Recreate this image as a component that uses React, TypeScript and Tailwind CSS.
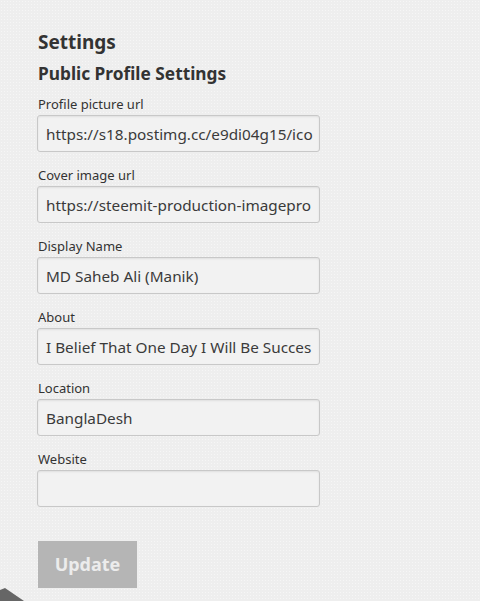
import React from "react";

const fields = [
  { label: "Profile picture url", value: "https://s18.postimg.cc/e9di04g15/ico" },
  { label: "Cover image url", value: "https://steemit-production-imagepro" },
  { label: "Display Name", value: "MD Saheb Ali (Manik)" },
  { label: "About", value: "I Belief That One Day I Will Be Succes" },
  { label: "Location", value: "BanglaDesh" },
  { label: "Website", value: "" },
];

export default function App() {
  return (
    <div
      className="relative w-[480px] h-[601px] overflow-hidden bg-[#eeeeee] bg-[image:radial-gradient(#f6f6f6_0.8px,transparent_0.9px)] bg-[size:3px_3px] text-[#333333]"
      style={{ fontFamily: '"Noto Sans", "Open Sans", sans-serif' }}
    >
      <div className="flex flex-col pl-[38px] pt-[29px]">
        <h1 className="text-[19px] leading-[27px] font-bold text-[#333]">Settings</h1>
        <h2 className="mt-[6px] text-[17.3px] leading-[24px] font-bold text-[#333]">Public Profile Settings</h2>
        <div className="mt-[9px] flex flex-col gap-[14px]">
          {fields.map((f) => (
            <div key={f.label} className="flex flex-col">
              <label className="text-[13px] leading-[18px] text-[#333]">{f.label}</label>
              <div className="mt-[2px] ml-[-1px] w-[283px] h-[37px] rounded-[3px] border border-[#c8c8c8] bg-[#f2f2f2] pl-[8px] pr-[4px] shadow-[inset_0_1px_2px_rgba(0,0,0,0.08)] flex items-center">
                <div className="w-full whitespace-nowrap text-[15.3px] leading-[22px] text-[#3a3a3a]">
                  {f.value}
                </div>
              </div>
            </div>
          ))}
        </div>
        <button
          className="mt-[34px] w-[99px] h-[47px] bg-[#b5b5b5] text-[#ececec] text-[18px] font-bold flex items-center justify-center"
          style={{ fontFamily: '"Noto Sans", "Open Sans", sans-serif' }}
        >
          Update
        </button>
      </div>
      <svg className="absolute left-0 bottom-0" width="26" height="14" viewBox="0 0 26 14">
        <polygon points="0,3 5,1 24,14 0,14" fill="#666666" />
      </svg>
    </div>
  );
}
